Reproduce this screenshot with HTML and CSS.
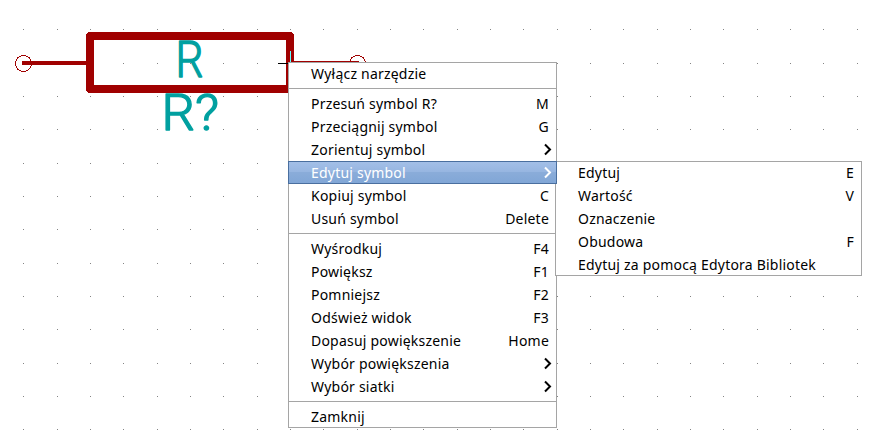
FILE: index.html
```
<!DOCTYPE html>
<html lang="pl">
<head>
<meta charset="utf-8">
<title>Edytor schematów</title>
<link rel="stylesheet" href="styles.css">
</head>
<body>
<svg class="sheet" width="871" height="441" viewBox="0 0 871 441">
  <defs>
    <pattern id="grid" width="100" height="100" patternUnits="userSpaceOnUse">
      <path class="dot" d="M23 29h1v1h-1zM57 29h1v1h-1zM90 29h1v1h-1zM23 63h1v1h-1zM57 63h1v1h-1zM90 63h1v1h-1zM23 96h1v1h-1zM57 96h1v1h-1zM90 96h1v1h-1z"/>
    </pattern>
  </defs>
  <rect width="871" height="441" fill="url(#grid)"/>
  <g class="part">
    <circle class="pin-end" cx="23.5" cy="63.5" r="8"/>
    <circle class="pin-end" cx="357.5" cy="63.5" r="8"/>
    <path class="pin" d="M23.5 63H90M290 63H357.5"/>
    <rect class="body" x="90" y="36" width="200" height="53"/>
  </g>
  <path class="cursor-h" d="M278 63h10v1h-10z"/>
  <path class="cursor-v" d="M290 51h1v11h-1z"/>
  <text class="field" x="175.5" y="77.3" textLength="28" lengthAdjust="spacingAndGlyphs">R</text>
  <text class="field" x="161.5" y="130.3" textLength="57.5" lengthAdjust="spacingAndGlyphs">R?</text>
</svg>
<nav class="menu main">
  <div class="item"><span>Wyłącz narzędzie</span></div>
  <hr>
  <div class="item"><span>Przesuń symbol R?</span><kbd>M</kbd></div>
  <div class="item"><span>Przeciągnij symbol</span><kbd>G</kbd></div>
  <div class="item"><span>Zorientuj symbol</span><svg class="arrow" width="9" height="13"><path d="M2 1.5l5 5-5 5"/></svg></div>
  <div class="item active"><span>Edytuj symbol</span><svg class="arrow" width="9" height="13"><path d="M2 1.5l5 5-5 5"/></svg></div>
  <div class="item"><span>Kopiuj symbol</span><kbd>C</kbd></div>
  <div class="item"><span>Usuń symbol</span><kbd>Delete</kbd></div>
  <hr>
  <div class="item"><span>Wyśrodkuj</span><kbd>F4</kbd></div>
  <div class="item"><span>Powiększ</span><kbd>F1</kbd></div>
  <div class="item"><span>Pomniejsz</span><kbd>F2</kbd></div>
  <div class="item"><span>Odśwież widok</span><kbd>F3</kbd></div>
  <div class="item"><span>Dopasuj powiększenie</span><kbd>Home</kbd></div>
  <div class="item"><span>Wybór powiększenia</span><svg class="arrow" width="9" height="13"><path d="M2 1.5l5 5-5 5"/></svg></div>
  <div class="item"><span>Wybór siatki</span><svg class="arrow" width="9" height="13"><path d="M2 1.5l5 5-5 5"/></svg></div>
  <hr>
  <div class="item"><span>Zamknij</span></div>
</nav>
<nav class="menu sub">
  <div class="item"><span>Edytuj</span><kbd>E</kbd></div>
  <div class="item"><span>Wartość</span><kbd>V</kbd></div>
  <div class="item"><span>Oznaczenie</span></div>
  <div class="item"><span>Obudowa</span><kbd>F</kbd></div>
  <div class="item"><span>Edytuj za pomocą Edytora Bibliotek</span></div>
</nav>
</body>
</html>
```
FILE: styles.css
```
body {
  margin: 0;
  width: 871px;
  height: 441px;
  position: relative;
  overflow: hidden;
  background: #fff;
  font: 14px/23px "Noto Sans", "Open Sans", sans-serif;
  letter-spacing: 0.21px;
  color: #000;
}
.sheet { display: block; letter-spacing: 0; }
.dot { fill: #848484; }
.part { fill: none; stroke: #a00000; shape-rendering: crispEdges; }
.pin-end { stroke-width: 1; }
.pin { stroke-width: 4; stroke-linecap: round; }
.body { stroke-width: 8; stroke-linejoin: round; }
.cursor-h { fill: #000; }
.cursor-v { fill: #5fffff; }
.field {
  font: 300 50px Roboto, "Liberation Sans", sans-serif;
  fill: #00a0a0;
  stroke: #00a0a0;
  stroke-width: 1.4;
  stroke-linejoin: round;
}
.menu {
  position: absolute;
  box-sizing: border-box;
  background: #fff;
}
.menu::after {
  content: "";
  position: absolute;
  inset: 0;
  border: 1px solid #a5a5a5;
  pointer-events: none;
}
.main { left: 288px; top: 62px; width: 269px; }
.sub { left: 555px; top: 161px; width: 307px; }
.item {
  display: flex;
  justify-content: space-between;
  align-items: center;
  height: 23px;
  padding: 0 8px 0 23px;
  white-space: nowrap;
}
.item kbd { font: inherit; }
.arrow {
  margin: 0 -3px 0 0;
  fill: none;
  stroke: currentColor;
  stroke-width: 2;
}
.active {
  position: relative;
  z-index: 1;
  color: #fff;
  background: linear-gradient(#a4c0e8, #96b5e0 50%, #8aacd9 50%, #80a6d6);
  box-shadow: inset 0 0 0 1px #4a6f9f;
}
hr {
  height: 1px;
  margin: 3px 0;
  border: 0;
  background: #a5a5a5;
}
```
